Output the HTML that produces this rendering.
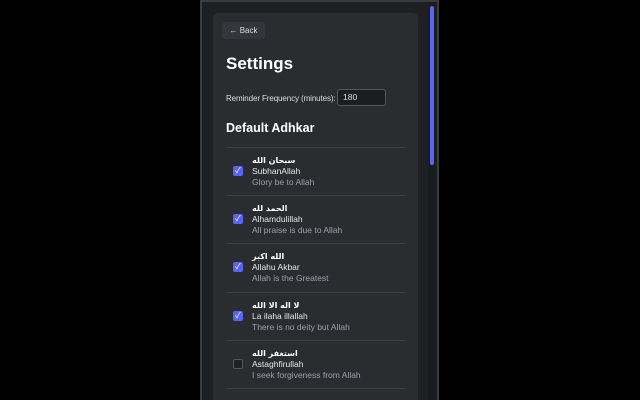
<!DOCTYPE html>
<html><head><meta charset="utf-8"><style>
*{margin:0;padding:0;box-sizing:border-box}
html,body{width:640px;height:400px;background:#000;overflow:hidden;font-family:"Liberation Sans","Noto Sans CJK SC",sans-serif}
.win{position:absolute;left:200px;top:0;width:239px;height:400px;background:#1e1f22;border-left:2px solid #3a3b3f;border-right:2px solid #3a3b3f;border-top:2px solid #3a3b3f;overflow:hidden}
.card{position:absolute;left:11px;top:11px;width:205px;height:400px;background:#2b2c30;border-radius:5px}
.thumb{position:absolute;left:228px;top:4px;width:4px;height:159px;background:#5865f2;border-radius:2px}
.track{position:absolute;left:226px;top:0;width:8px;height:400px;background:#1a1b1e}
.back{position:absolute;left:9px;top:9px;width:43px;height:17px;background:#35363b;border-radius:3px;color:#ddd;font-size:8px;line-height:17px;text-align:center}
h1{position:absolute;left:13px;top:41px;font-size:17px;color:#fff;font-weight:bold;line-height:20px}
.lbl{position:absolute;left:13px;top:80px;font-size:8px;color:#ddd;line-height:12px;white-space:nowrap;letter-spacing:-0.1px}
.inp{position:absolute;left:124px;top:76px;width:49px;height:17px;border:1px solid #55575c;border-radius:3px;background:#1c1d20;color:#ddd;font-size:8.5px;line-height:15px;padding-left:5px}
h2{position:absolute;left:13px;top:107px;font-size:12.5px;color:#fff;font-weight:bold;line-height:16px}
.list{position:absolute;left:13px;top:134px;width:179px}
.item{height:48.2px;border-top:1px solid #3d3f44;position:relative}
.cb{position:absolute;left:7px;top:18px;width:10px;height:10px;border-radius:2px;background:#5865f2;color:#fff;font-size:8px;line-height:10px;text-align:center}
.cb.off{background:#1e1f22;border:1px solid #55575c}
.t{position:absolute;left:26px;top:7px;font-size:8.5px;line-height:11px;white-space:nowrap}
.ar{color:#fff;font-weight:bold;font-family:"DejaVu Sans",sans-serif;font-size:8px}
.n{color:#e6e6e6}
.d{color:#9aa0ad}
</style></head><body>
<div class="win">
<div class="track"></div><div class="thumb"></div>
<div class="card">
<div class="back">← Back</div>
<h1>Settings</h1>
<div class="lbl">Reminder Frequency (minutes):</div>
<div class="inp">180</div>
<h2>Default Adhkar</h2>
<div class="list">
<div class="item"><div class="cb">✓</div><div class="t"><div class="ar">سبحان الله</div><div class="n">SubhanAllah</div><div class="d">Glory be to Allah</div></div></div>
<div class="item"><div class="cb">✓</div><div class="t"><div class="ar">الحمد لله</div><div class="n">Alhamdulillah</div><div class="d">All praise is due to Allah</div></div></div>
<div class="item"><div class="cb">✓</div><div class="t"><div class="ar">الله اكبر</div><div class="n">Allahu Akbar</div><div class="d">Allah is the Greatest</div></div></div>
<div class="item"><div class="cb">✓</div><div class="t"><div class="ar">لا اله الا الله</div><div class="n">La ilaha illallah</div><div class="d">There is no deity but Allah</div></div></div>
<div class="item"><div class="cb off"></div><div class="t"><div class="ar">استغفر الله</div><div class="n">Astaghfirullah</div><div class="d">I seek forgiveness from Allah</div></div></div>
<div class="item"></div>
</div>
</div>
</div>
</body></html>
